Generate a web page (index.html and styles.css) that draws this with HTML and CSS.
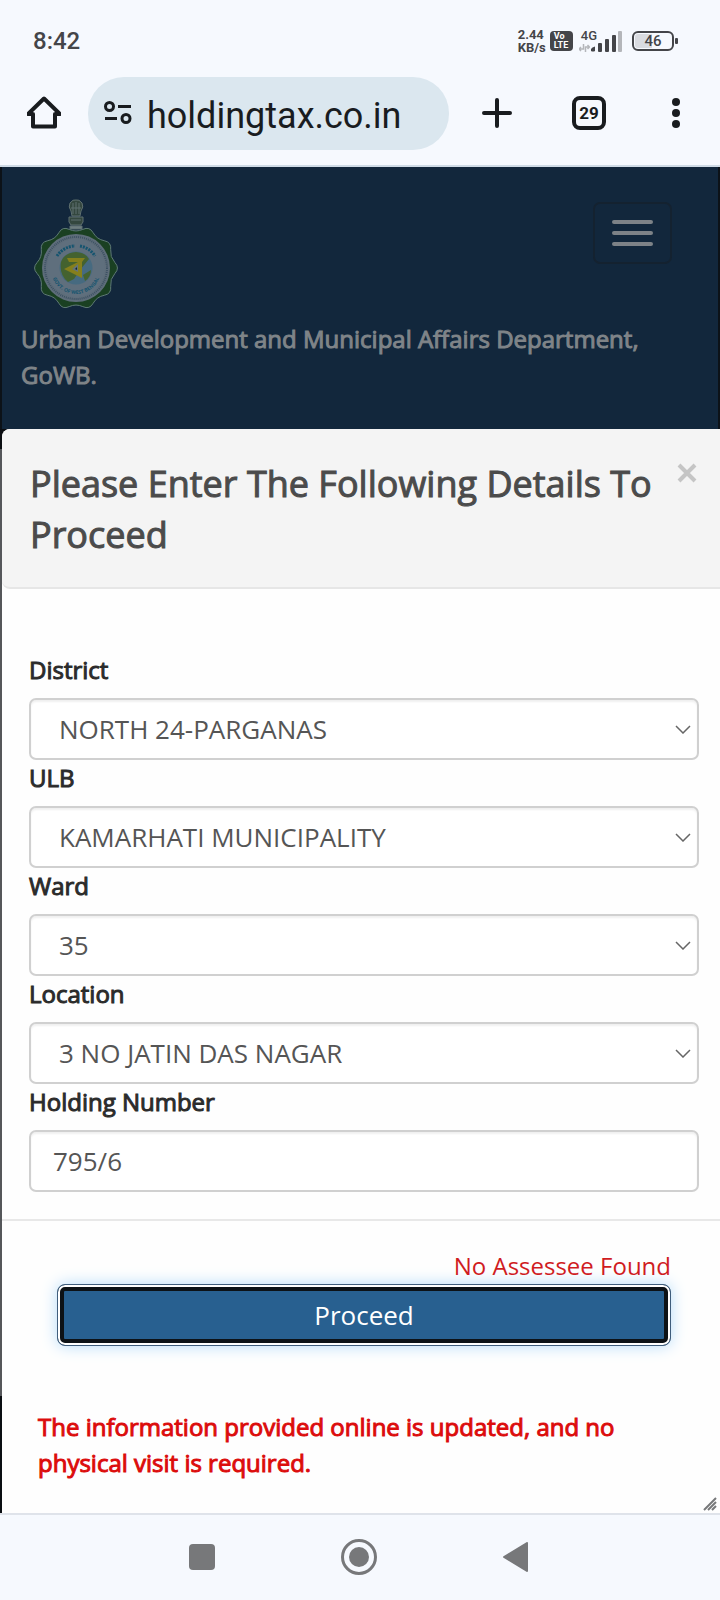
FILE: index.html
```html
<!DOCTYPE html>
<html lang="en">
<head>
  <meta charset="UTF-8">
  <meta name="viewport" content="width=device-width, initial-scale=1.0">
  <title>Holding Tax</title>
  <link rel="stylesheet" href="styles.css">
</head>
<body>
  <div class="status-bar">
    <div class="clock">8:42</div>
    <div class="status-icons">
      <div class="speed">2.44<br>KB/s</div>
      <div class="volte">Vo<br>LTE</div>
      <div class="network">
        <div class="network-left">
          <span class="network-type">4G</span>
          <svg class="arrows" viewBox="0 0 11 8" width="11" height="8">
            <path d="M0 5H4.500V0M2 3L0 5L2 7M10.500 3H6.500V8M8.500 1L10.500 3L8.500 5" fill="none" stroke="#b4b6ba" stroke-width="1.500"/>
          </svg>
        </div>
        <svg viewBox="0 0 32 21" width="32" height="21">
          <g fill="#444549">
            <path d="M0 20V18Q1 16 4 15.500V20Q2 21 0 20Z"/>
            <rect x="7" y="12" width="4" height="9" rx="1"/>
            <rect x="14" y="8" width="4" height="13" rx="1"/>
            <rect x="21" y="4" width="4" height="17" rx="1"/>
          </g>
          <rect x="27" y="0" width="4" height="21" rx="1" fill="#b4b6ba"/>
        </svg>
      </div>
      <div class="battery"><span class="battery-level">46</span></div>
    </div>
  </div>

  <div class="toolbar">
    <button class="tool-button" type="button" aria-label="Home">
      <svg viewBox="0 0 34 34" width="34" height="34" fill="none" stroke="#191c1f" stroke-width="4" stroke-linejoin="round">
        <path d="M1 18H6V30.500H28V18H33L17 2.500Z"/>
      </svg>
    </button>
    <div class="address-bar">
      <svg viewBox="0 0 28 24" width="28" height="24" fill="none" stroke="#191c1f" stroke-width="3">
        <circle cx="5.500" cy="5.500" r="4"/>
        <path d="M14 5.500H27M1 17.500H13"/>
        <circle cx="22" cy="17.500" r="4"/>
      </svg>
      <input class="address" type="text" aria-label="Address" value="holdingtax.co.in">
    </div>
    <div class="tools">
      <button class="tool-button" type="button" aria-label="New tab">
        <svg viewBox="0 0 30 30" width="30" height="30" stroke="#191c1f" stroke-width="4" stroke-linecap="round">
          <path d="M2 15H28M15 2V28"/>
        </svg>
      </button>
      <button class="tool-button tabs" type="button">29</button>
      <button class="tool-button" type="button" aria-label="Menu">
        <svg viewBox="0 0 8 30" width="8" height="30" fill="#191c1f">
          <circle cx="4" cy="4" r="4"/>
          <circle cx="4" cy="15" r="4"/>
          <circle cx="4" cy="26" r="4"/>
        </svg>
      </button>
    </div>
  </div>

  <header class="site-header">
    <div class="brand-row">
      <svg class="emblem" viewBox="-46 -74 92 122" width="92" height="122">
        <defs>
          <path id="arc-bottom" d="M-25 1A25 25 0 0 0 25 1"/>
        </defs>
        <!-- lion capital -->
        <g fill="#34473f" stroke="#5f7070" stroke-width="1">
          <path d="M-6 -65Q-8 -61 -5 -57L-4 -52H4L5 -57Q8 -61 6 -65Q3 -69 0 -68Q-3 -69 -6 -65Z"/>
          <path d="M-7 -51H7V-46L5 -43H-5L-7 -46Z"/>
          <path d="M-6 -42H6V-39H-6Z" fill="#6e7d80"/>
          <path d="M-3 -65V-54M0 -66V-54M3 -65V-54M-5 -60H5M-5 -48H5" fill="none"/>
        </g>
        <!-- ten lobed badge -->
        <path d="M38.900 -5.500Q44 0 38.900 5.500Q33.800 11 34.700 18.400Q35.600 25.900 28.200 27.300Q20.900 28.700 17.200 35.200Q13.600 41.800 6.800 38.600Q0 35.500 -6.800 38.600Q-13.600 41.800 -17.200 35.200Q-20.900 28.700 -28.200 27.300Q-35.600 25.900 -34.700 18.400Q-33.800 11 -38.900 5.500Q-44 0 -38.900 -5.500Q-33.800 -11 -34.700 -18.400Q-35.600 -25.900 -28.200 -27.300Q-20.900 -28.700 -17.200 -35.200Q-13.600 -41.800 -6.800 -38.600Q0 -35.500 6.800 -38.600Q13.600 -41.800 17.200 -35.200Q20.900 -28.700 28.200 -27.300Q35.600 -25.900 34.700 -18.400Q33.800 -11 38.900 -5.500Z" fill="#1a4022" stroke="#5f7a75" stroke-width="1"/>
        <circle r="34" fill="#5e6d7a"/>
        <circle r="31" fill="none" stroke="#3d5163" stroke-width="2" stroke-dasharray="1 1"/>
        <circle r="29" fill="#5f6f7d"/>
        <path d="M-19 -12A22.500 22.500 0 0 1 -1 -22M4 -22A22.500 22.500 0 0 1 19 -12" fill="none" stroke="#15546f" stroke-width="3" stroke-dasharray="2 1"/>
        <text class="emblem-text"><textPath href="#arc-bottom" startOffset="50%" text-anchor="middle">GOVT. OF WEST BENGAL</textPath></text>
        <circle r="16.500" fill="#466a80"/>
        <path d="M-15 -6Q-12 -15 0 -16Q10 -15 13 -9L4 2L-2 11L-8 14Q-17 7 -15 -6Z" fill="#44622f"/>
        <path d="M7 7L15 2Q15 9 9 13Z" fill="#44622f"/>
        <path d="M-9 -10H9L6 -6V10L-12 1L2 -6H-7Z" fill="#857f1c"/>
        <path d="M-4 1L2 -4V4Z" fill="#64747b"/>
        <path d="M-1 1L1 -1V2Z" fill="#18242c"/>
      </svg>
      <button class="navbar-toggle" type="button" aria-label="Toggle navigation">
        <span class="icon-bar"></span>
        <span class="icon-bar"></span>
        <span class="icon-bar"></span>
      </button>
    </div>
    <div class="department">Urban Development and Municipal Affairs Department, GoWB.</div>
  </header>

  <div class="modal-area">
    <form class="modal">
      <div class="modal-header">
        <h1 class="modal-title">Please Enter The Following Details To Proceed</h1>
        <button class="close" type="button" aria-label="Close">
          <svg viewBox="0 0 20 20" width="20" height="20" stroke="#c5c5c5" stroke-width="4">
            <path d="M2 2L18 18M18 2L2 18"/>
          </svg>
        </button>
      </div>
      <div class="modal-body">
        <label for="district">District</label>
        <div class="select-box">
          <select class="form-control" id="district"><option>NORTH 24-PARGANAS</option></select>
          <svg class="chevron" viewBox="0 0 16 9" width="16" height="9"><path d="M1 1L8 8L15 1"/></svg>
        </div>
        <label for="ulb">ULB</label>
        <div class="select-box">
          <select class="form-control" id="ulb"><option>KAMARHATI MUNICIPALITY</option></select>
          <svg class="chevron" viewBox="0 0 16 9" width="16" height="9"><path d="M1 1L8 8L15 1"/></svg>
        </div>
        <label for="ward">Ward</label>
        <div class="select-box">
          <select class="form-control" id="ward"><option>35</option></select>
          <svg class="chevron" viewBox="0 0 16 9" width="16" height="9"><path d="M1 1L8 8L15 1"/></svg>
        </div>
        <label for="location">Location</label>
        <div class="select-box">
          <select class="form-control" id="location"><option>3 NO JATIN DAS NAGAR</option></select>
          <svg class="chevron" viewBox="0 0 16 9" width="16" height="9"><path d="M1 1L8 8L15 1"/></svg>
        </div>
        <label for="holding">Holding Number</label>
        <input class="form-control" id="holding" type="text" value="795/6">
      </div>
      <div class="modal-footer">
        <div class="error">No Assessee Found</div>
        <button class="proceed" type="button">Proceed</button>
      </div>
      <p class="notice">The information provided online is updated, and no physical visit is required.</p>
      <svg class="grip" viewBox="0 0 14 14" width="14" height="14">
        <path d="M1 13L13 1M5 13L13 5M9 13L13 9" stroke="#77787a" stroke-width="2"/>
      </svg>
    </form>
  </div>

  <div class="system-nav">
    <button class="tool-button" type="button" aria-label="Recent apps">
      <svg viewBox="0 0 26 26" width="26" height="26"><rect width="26" height="26" rx="4" fill="#77787a"/></svg>
    </button>
    <button class="tool-button" type="button" aria-label="Home screen">
      <svg viewBox="0 0 36 36" width="36" height="36">
        <circle cx="18" cy="18" r="16.500" fill="none" stroke="#77787a" stroke-width="3"/>
        <circle cx="18" cy="18" r="10" fill="#77787a"/>
      </svg>
    </button>
    <button class="tool-button" type="button" aria-label="Back">
      <svg viewBox="0 0 26 30" width="26" height="30"><path d="M1 15L24 1V29Z" fill="#77787a" stroke="#77787a" stroke-width="2" stroke-linejoin="round"/></svg>
    </button>
  </div>
</body>
</html>
```
FILE: styles.css
```css
* {
  box-sizing: border-box;
}

body {
  margin: 0;
  min-height: 100vh;
  display: flex;
  flex-direction: column;
  font-family: "Open Sans", "Noto Sans", sans-serif;
  font-size: 24px;
  line-height: 36px;
  background-color: #f6f9fe;
}

svg {
  display: block;
  flex-shrink: 0;
}

button {
  font-family: inherit;
  cursor: pointer;
}

/* phone status bar */
.status-bar {
  display: flex;
  justify-content: space-between;
  align-items: center;
  height: 77px;
  padding: 4px 42px 0 33px;
  font-family: Roboto, sans-serif;
  font-weight: 500;
  color: #444549;
}

.clock {
  font-size: 24px;
}

.status-icons {
  display: flex;
  align-items: center;
}

.speed {
  font-size: 13px;
  line-height: 13px;
  font-weight: 700;
}

.volte {
  width: 23px;
  height: 20px;
  margin: 0 6px 0 4px;
  padding: 1px 0 0 4px;
  border-radius: 4px;
  background-color: #444549;
  color: #fff;
  font-size: 9px;
  line-height: 9px;
  font-weight: 700;
}

.network {
  display: flex;
  align-items: flex-end;
}

.network-left {
  display: flex;
  flex-direction: column;
  gap: 2px;
}

.network-type {
  font-size: 13px;
  line-height: 12px;
  padding-left: 2px;
  margin-right: -6px;
}

.arrows {
  margin-right: 1px;
}

.battery {
  display: flex;
  align-items: center;
  margin-left: 9px;
}

.battery-level {
  width: 42px;
  height: 20px;
  border: 2px solid #444549;
  border-radius: 6px;
  background: linear-gradient(to right, #d9dbe0 46%, transparent 46%) content-box;
  padding: 1px;
  font-size: 15px;
  line-height: 14px;
  text-align: center;
}

.battery::after {
  content: "";
  width: 3px;
  height: 6px;
  margin-left: 1px;
  border-radius: 1px;
  background-color: #444549;
}

/* browser toolbar */
.toolbar {
  display: flex;
  align-items: center;
  height: 90px;
  padding: 0 40px 16px 27px;
  border-bottom: 2px solid #cfdbe6;
}

.tool-button {
  padding: 0;
  border: none;
  background: none;
}

.address-bar {
  flex: 1;
  min-width: 0;
  display: flex;
  align-items: center;
  gap: 15px;
  height: 73px;
  margin-left: 27px;
  padding: 0 16px;
  border-radius: 36px;
  background-color: #dbe7ef;
}

.address {
  flex: 1;
  width: 100%;
  min-width: 0;
  padding: 5px 0 0;
  border: none;
  outline: none;
  background: none;
  font-family: Roboto, sans-serif;
  font-size: 36px;
  color: #191c1f;
}

.tools {
  display: flex;
  align-items: center;
  gap: 60px;
  margin-left: 33px;
}

.tabs {
  width: 34px;
  height: 34px;
  margin-right: 6px;
  border: 4px solid #191c1f;
  border-radius: 8px;
  font-family: Roboto, sans-serif;
  font-size: 17px;
  font-weight: 700;
  line-height: 26px;
  color: #191c1f;
}

/* site header, dimmed behind the dialog */
.site-header {
  padding: 27px 46px 36px 19px;
  border: 2px solid #0c1218;
  border-width: 0 2px;
  background-color: #12273c;
}

.brand-row {
  display: flex;
  justify-content: space-between;
  align-items: flex-start;
  margin-left: 9px;
}

.emblem {
  margin-bottom: 5px;
}

.emblem-text {
  font-size: 5px;
  font-weight: 700;
  fill: #15546f;
}

.navbar-toggle {
  display: flex;
  flex-direction: column;
  justify-content: center;
  align-items: center;
  gap: 7px;
  width: 79px;
  height: 62px;
  margin-top: 8px;
  padding: 0;
  border: 2px solid #142230;
  border-radius: 7px;
  background: none;
}

.icon-bar {
  width: 41px;
  height: 4px;
  border-radius: 2px;
  background-color: #7d8287;
}

.department {
  color: #7f8488;
  -webkit-text-stroke: 1px #7f8488;
}

/* dialog */
.modal-area {
  flex: 1;
  display: flex;
  padding-left: 2px;
  background: linear-gradient(#0b0e12 20px, #55575a 20px, #55575a 967px, #0b0e12 967px);
}

.modal {
  flex: 1;
  min-width: 0;
  position: relative;
  border-radius: 8px 0 0 0;
  background-color: #fefefe;
}

.modal-header {
  display: flex;
  align-items: flex-start;
  justify-content: space-between;
  padding: 29px 23px 27px 28px;
  border-bottom: 2px solid #e6e6e6;
  border-radius: 8px 0 0 8px;
  background-color: #f4f4f4;
}

.modal-title {
  margin: 0;
  font-size: 36px;
  line-height: 51px;
  font-weight: 400;
  color: #4b4b4b;
  -webkit-text-stroke: 1px #4b4b4b;
}

.close {
  margin-top: 5px;
  padding: 0;
  border: none;
  background: none;
}

.modal-body {
  padding: 63px 21px 27px 27px;
}

.modal-body label {
  display: block;
  margin-bottom: 10px;
  color: #2b2b2b;
  -webkit-text-stroke: 1px #2b2b2b;
}

.form-control {
  display: block;
  width: 100%;
  height: 62px;
  padding: 0 22px;
  border: 2px solid #d0d0d0;
  border-radius: 7px;
  box-shadow: inset 0 2px 2px #f0f0f0;
  background-color: #fff;
  font-family: inherit;
  font-size: 26px;
  color: #555;
  appearance: none;
}

.select-box {
  display: grid;
  align-items: center;
}

.select-box .form-control,
.chevron {
  grid-area: 1 / 1;
}

.select-box .form-control {
  padding: 0 28px;
}

.chevron {
  justify-self: end;
  margin-right: 8px;
  fill: none;
  stroke: #666;
  stroke-width: 1.5;
  pointer-events: none;
}

.modal-footer {
  padding: 27px 49px 0 55px;
  border-top: 2px solid #e8e8e8;
}

.error {
  text-align: right;
  color: #d01c1f;
}

.proceed {
  display: block;
  width: 100%;
  height: 62px;
  border: 1px solid #3f5d7c;
  border-radius: 8px;
  background-color: #286090;
  box-shadow: inset 0 0 0 2px #fff, inset 0 0 0 6px #0d1216, 0 0 16px #b5dcfa;
  font-size: 26px;
  color: #fff;
}

.notice {
  margin: 63px 49px 32px 36px;
  color: #dc0c0c;
  -webkit-text-stroke: 1px #dc0c0c;
}

.grip {
  position: absolute;
  right: 3px;
  bottom: 2px;
}

/* phone navigation */
.system-nav {
  display: flex;
  justify-content: center;
  align-items: center;
  gap: 126px;
  height: 87px;
  padding: 0 2px 2px 0;
  border-top: 2px solid #dfe3ea;
}
```
